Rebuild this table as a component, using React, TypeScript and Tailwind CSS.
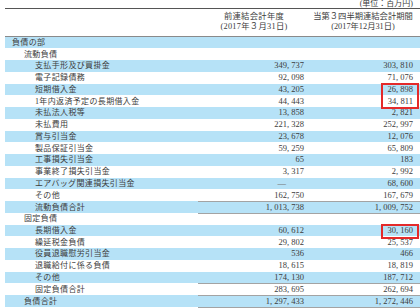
type Row = {
  label: string;
  indent: 0 | 1 | 2;
  prev?: string;
  curr?: string;
  total?: boolean;
  mark?: 1 | 2;
};

const rows: Row[] = [
  { label: "負債の部", indent: 0 },
  { label: "流動負債", indent: 1 },
  { label: "支払手形及び買掛金", indent: 2, prev: "349, 737", curr: "303, 810" },
  { label: "電子記録債務", indent: 2, prev: "92, 098", curr: "71, 076" },
  { label: "短期借入金", indent: 2, prev: "43, 205", curr: "26, 898", mark: 2 },
  { label: "1年内返済予定の長期借入金", indent: 2, prev: "44, 443", curr: "34, 811" },
  { label: "未払法人税等", indent: 2, prev: "13, 858", curr: "2, 821" },
  { label: "未払費用", indent: 2, prev: "221, 328", curr: "252, 997" },
  { label: "賞与引当金", indent: 2, prev: "23, 678", curr: "12, 076" },
  { label: "製品保証引当金", indent: 2, prev: "59, 259", curr: "65, 809" },
  { label: "工事損失引当金", indent: 2, prev: "65", curr: "183" },
  { label: "事業終了損失引当金", indent: 2, prev: "3, 317", curr: "2, 992" },
  { label: "エアバッグ関連損失引当金", indent: 2, prev: "—", curr: "68, 600" },
  { label: "その他", indent: 2, prev: "162, 750", curr: "167, 679" },
  { label: "流動負債合計", indent: 2, prev: "1, 013, 738", curr: "1, 009, 752", total: true },
  { label: "固定負債", indent: 1 },
  { label: "長期借入金", indent: 2, prev: "60, 612", curr: "30, 160", mark: 1 },
  { label: "繰延税金負債", indent: 2, prev: "29, 802", curr: "25, 537" },
  { label: "役員退職慰労引当金", indent: 2, prev: "536", curr: "466" },
  { label: "退職給付に係る負債", indent: 2, prev: "18, 615", curr: "18, 819" },
  { label: "その他", indent: 2, prev: "174, 130", curr: "187, 712" },
  { label: "固定負債合計", indent: 2, prev: "283, 695", curr: "262, 694", total: true },
  { label: "負債合計", indent: 1, prev: "1, 297, 433", curr: "1, 272, 446", total: true },
];

const indentClass = ["pl-[7px]", "pl-[19px]", "pl-[30px]"];

export default function App() {
  return (
    <div
      className="w-[420px] h-[308px] overflow-hidden bg-white pl-[5px] text-[#3c3c3c]"
      style={{ fontFamily: '"Liberation Serif", "Noto Sans CJK JP", serif' }}
    >
      <div className="h-[8px] flex justify-end items-end pr-[7px] text-[8px] leading-[8px] whitespace-nowrap">
        (単位：百万円)
      </div>
      <div className="grid grid-cols-[193px_112px_110px] h-[28.5px] border-t border-[#555] border-b border-b-[#8a8a8a] text-[8.3px] leading-[10px]">
        <div />
        <div className="flex flex-col items-center justify-center tracking-[0.3px]">
          <span>前連結会計年度</span>
          <span>(2017年３月31日)</span>
        </div>
        <div className="flex flex-col items-center justify-center pr-[4px]">
          <span>当第３四半期連結会計期間</span>
          <span>(2017年12月31日)</span>
        </div>
      </div>
      {rows.map((r, i) => {
        const bg = i % 2 === 0 ? "bg-[#b6e2f7]" : "bg-white";
        const line = r.total ? "border-t border-b border-[#a3a3a3]" : "";
        return (
          <div key={i} className={`grid grid-cols-[193px_112px_110px] h-[11.75px] text-[8px] leading-[11px] ${bg}`}>
            <div className={`${indentClass[r.indent]} flex items-center whitespace-nowrap tracking-[0.35px]`}>{r.label}</div>
            <div className={`flex items-center justify-end ${r.prev === "—" ? "pr-[24px] text-[#777]" : "pr-[6px]"} text-[8.5px] ${line}`}>
              {r.prev}
            </div>
            <div className={`relative flex items-center justify-end pr-[7px] text-[8.5px] ${line}`}>
              {r.curr}
              {r.mark === 2 && (
                <div className="absolute left-[71px] right-[1px] top-[-1px] h-[26px] border-2 border-[#e42a2a]" />
              )}
              {r.mark === 1 && (
                <div className="absolute left-[71px] right-[1px] top-[-1px] h-[15px] border-2 border-[#e42a2a]" />
              )}
            </div>
          </div>
        );
      })}
    </div>
  );
}
